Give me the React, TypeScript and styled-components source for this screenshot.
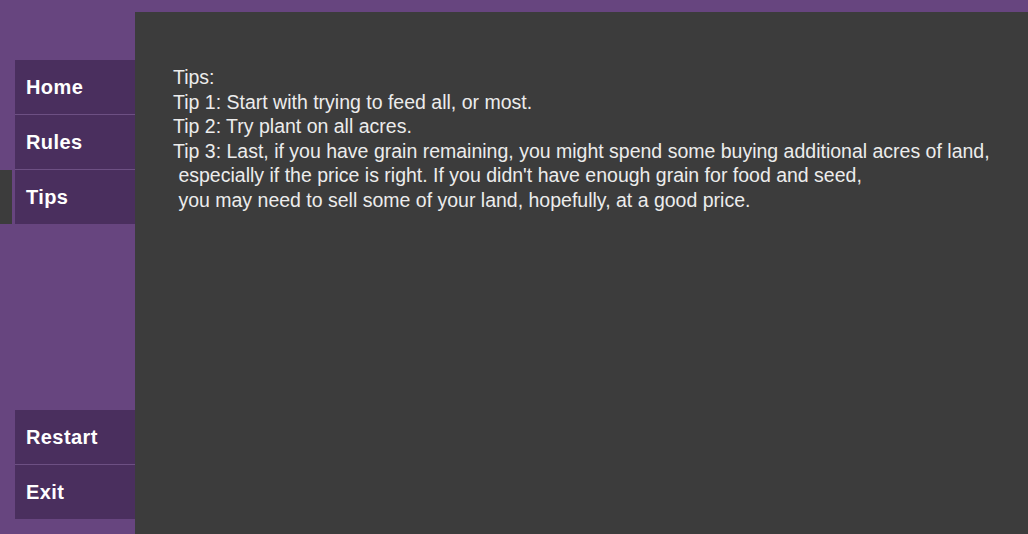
import React from "react";
import styled, { createGlobalStyle } from "styled-components";

const Global = createGlobalStyle`
  html, body { margin: 0; padding: 0; }
  body {
    background: #67457f;
    font-family: "Liberation Sans", Arial, sans-serif;
    overflow: hidden;
  }
`;

const Page = styled.div`
  display: flex;
  height: 534px;
  width: 1028px;
  background: #67457f;
`;

const Sidebar = styled.nav`
  width: 135px;
  flex: none;
  display: flex;
  flex-direction: column;
  justify-content: space-between;
  padding: 60px 0 15px 15px;
  box-sizing: border-box;
`;

const Group = styled.div`
  display: flex;
  flex-direction: column;
`;

const NavButton = styled.div<{ $active?: boolean }>`
  position: relative;
  height: 54px;
  display: flex;
  align-items: center;
  padding-left: 11px;
  background: #4a2f5e;
  color: #ffffff;
  font-weight: bold;
  font-size: 20px;
  letter-spacing: 0.4px;
  & + & {
    border-top: 1px solid #6d5083;
  }
  &::before {
    content: "";
    display: ${(p) => (p.$active ? "block" : "none")};
    position: absolute;
    left: -15px;
    top: 0;
    width: 12px;
    height: 100%;
    background: #3c3c3c;
  }
`;

const Panel = styled.main`
  flex: 1;
  margin-top: 12px;
  background: #3c3c3c;
  padding: 53px 0 0 38px;
  color: #ececec;
  font-size: 19.5px;
  line-height: 24.5px;
`;

const Line = styled.div`
  white-space: pre;
`;

const lines = [
  "Tips:",
  "Tip 1: Start with trying to feed all, or most.",
  "Tip 2: Try plant on all acres.",
  "Tip 3: Last, if you have grain remaining, you might spend some buying additional acres of land,",
  " especially if the price is right. If you didn't have enough grain for food and seed,",
  " you may need to sell some of your land, hopefully, at a good price.",
];

export default function App() {
  return (
    <>
      <Global />
      <Page>
        <Sidebar>
          <Group>
            <NavButton>Home</NavButton>
            <NavButton>Rules</NavButton>
            <NavButton $active>Tips</NavButton>
          </Group>
          <Group>
            <NavButton>Restart</NavButton>
            <NavButton>Exit</NavButton>
          </Group>
        </Sidebar>
        <Panel>
          {lines.map((l, i) => (
            <Line key={i}>{l}</Line>
          ))}
        </Panel>
      </Page>
    </>
  );
}
